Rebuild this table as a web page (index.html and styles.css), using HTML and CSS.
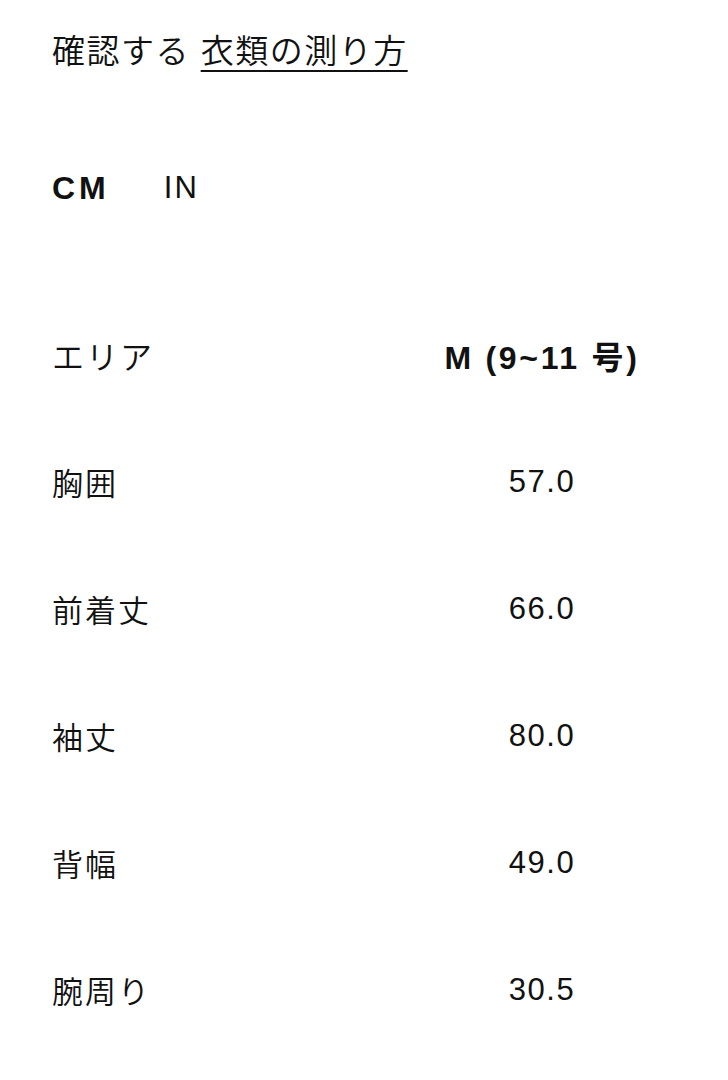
FILE: index.html
```html
<!DOCTYPE html>
<html lang="ja">
<head>
<meta charset="utf-8">
<title>サイズ表</title>
<link rel="stylesheet" href="styles.css">
</head>
<body>
<main class="page">
  <p class="intro">確認する <a class="guide-link" href="#">衣類の測り方</a></p>
  <div class="units">
    <span class="unit unit-active">CM</span>
    <span class="unit">IN</span>
  </div>
  <div class="size-table">
    <div class="cell head">エリア</div>
    <div class="cell head value">M (9~11 号)</div>
    <div class="cell">胸囲</div>
    <div class="cell value">57.0</div>
    <div class="cell">前着丈</div>
    <div class="cell value">66.0</div>
    <div class="cell">袖丈</div>
    <div class="cell value">80.0</div>
    <div class="cell">背幅</div>
    <div class="cell value">49.0</div>
    <div class="cell">腕周り</div>
    <div class="cell value">30.5</div>
  </div>
</main>
</body>
</html>
```

FILE: styles.css
```css
html, body {
  margin: 0;
  padding: 0;
  background: #ffffff;
}

body {
  font-family: "Liberation Sans", "Noto Sans CJK JP", sans-serif;
  color: #111111;
}

.page {
  padding: 32px 0 0 52px;
}

.intro {
  margin: 0;
  font-size: 33px;
  line-height: 40px;
  letter-spacing: 1.5px;
  font-weight: 350;
}

.guide-link {
  color: inherit;
  text-decoration: underline;
  text-decoration-thickness: 2px;
  text-underline-offset: 7px;
}

.units {
  margin-top: 96px;
  display: flex;
  gap: 54px;
  font-size: 31px;
  line-height: 40px;
  letter-spacing: 2px;
}

.unit {
  font-weight: 350;
}

.unit-active {
  font-size: 32px;
  letter-spacing: 4px;
  font-weight: 700;
}

.size-table {
  margin-top: 83px;
  display: grid;
  grid-template-columns: 356px 268px;
  grid-auto-rows: 127px;
  font-size: 31px;
  letter-spacing: 2px;
}

.cell {
  display: flex;
  align-items: center;
  font-weight: 350;
}

.cell.head {
  font-size: 32px;
}

.cell.value {
  justify-content: center;
  letter-spacing: 1.5px;
}

.cell.head.value {
  font-weight: 700;
  letter-spacing: 2.7px;
}
```
